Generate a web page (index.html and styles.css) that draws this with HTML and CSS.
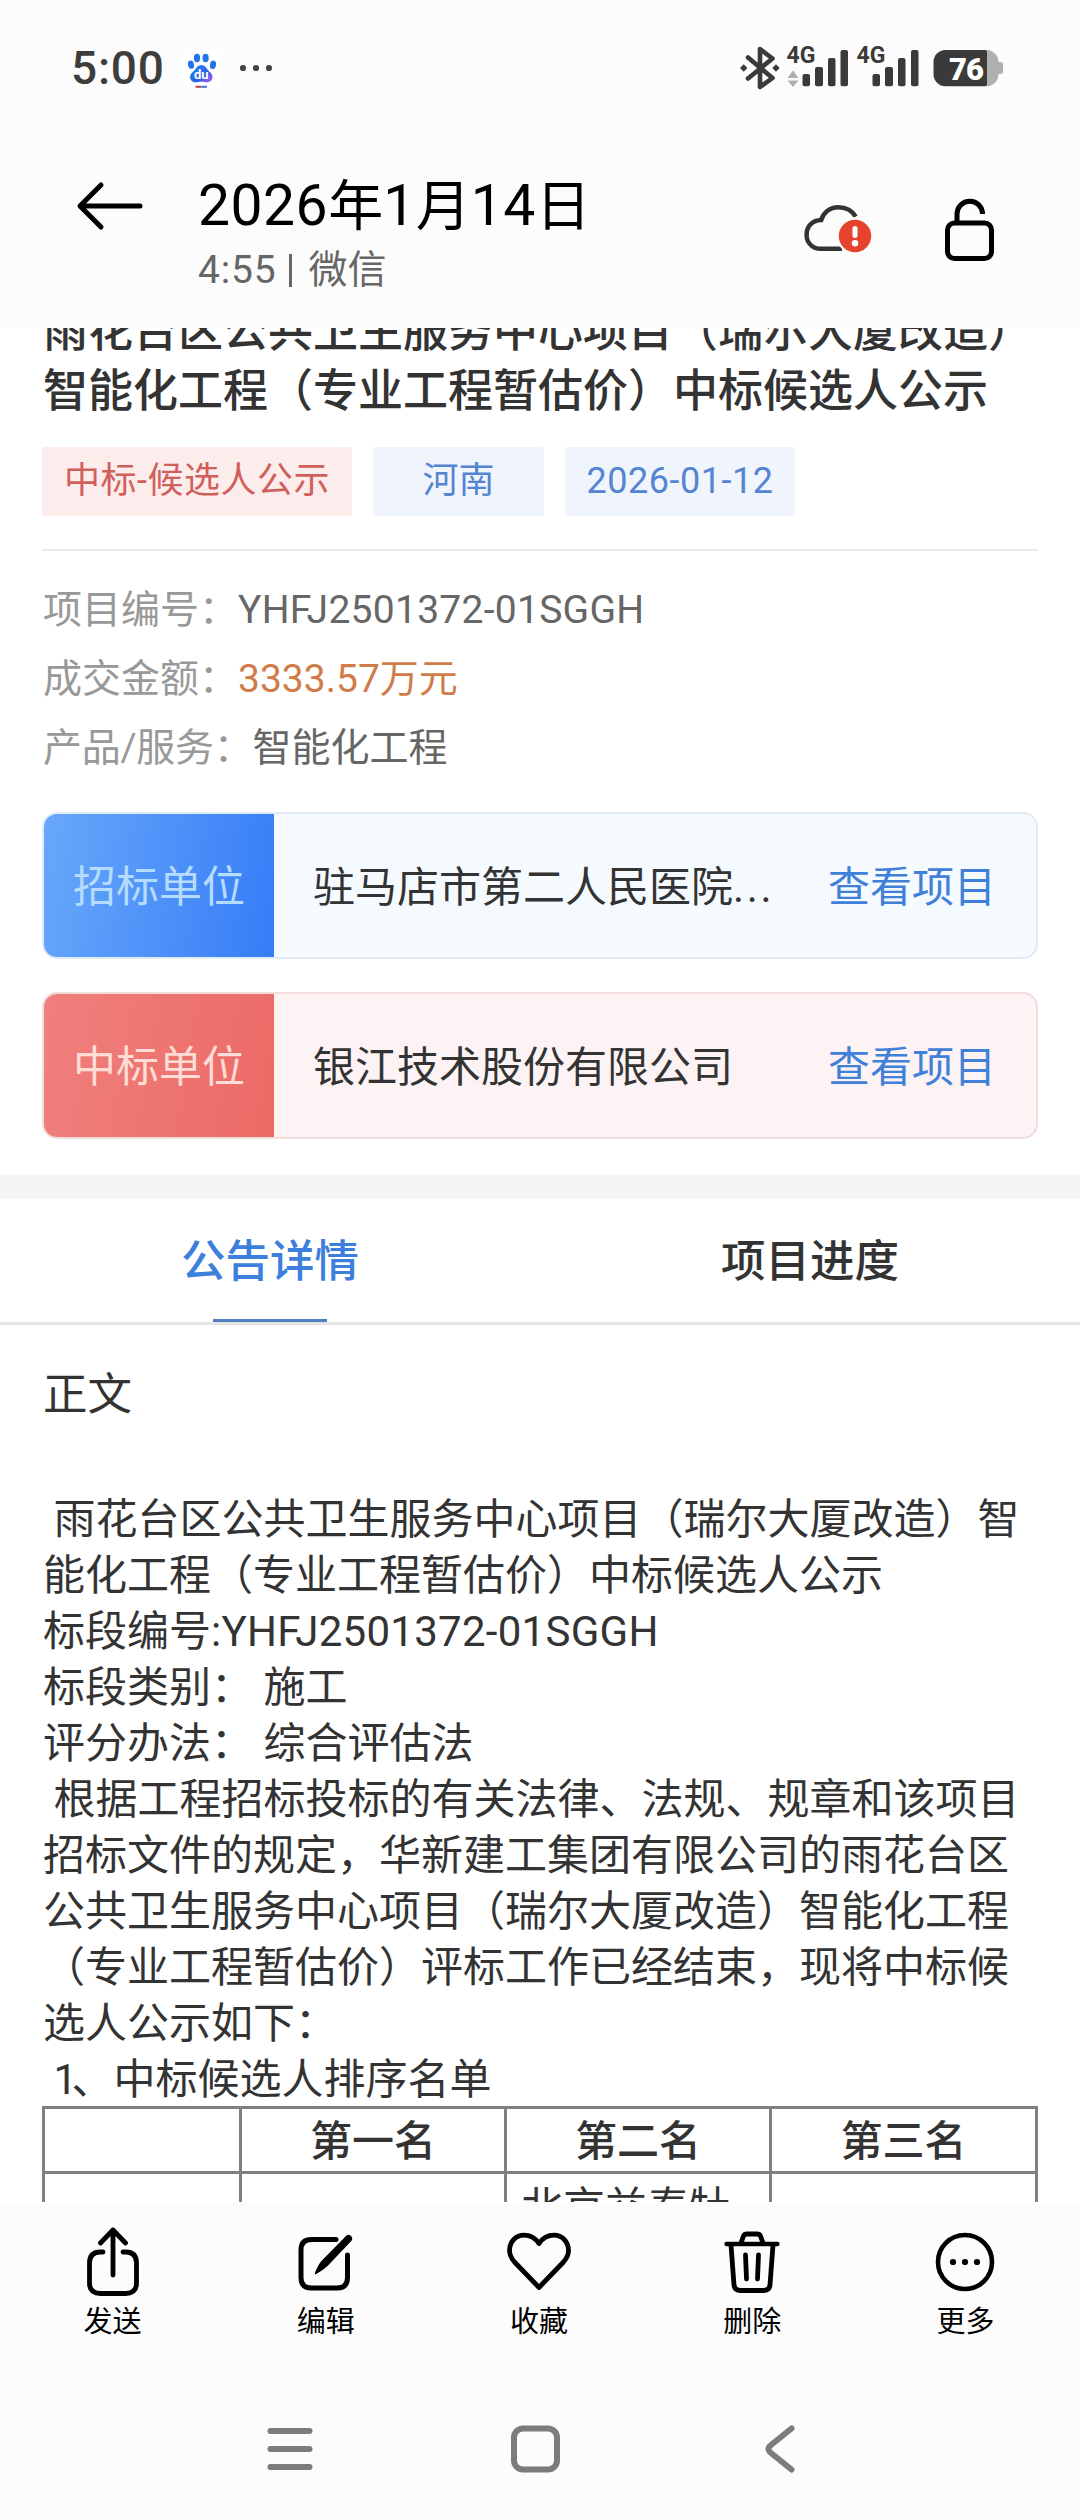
FILE: index.html
```html
<!DOCTYPE html>
<html lang="zh-CN">
<head>
<meta charset="utf-8">
<title>2026年1月14日</title>
<link rel="stylesheet" href="styles.css">
</head>
<body>
<div class="screen">
  <div class="status">
    <span class="clock">5:00</span>
    <svg class="paw" viewBox="0 0 38 39" width="38" height="39">
      <defs><linearGradient id="pawFill" x1="0" y1="0" x2="1" y2="1"><stop offset="0" stop-color="#1a8cf5"/><stop offset=".6" stop-color="#2b62ea"/><stop offset="1" stop-color="#b45cf0"/></linearGradient></defs>
      <rect width="38" height="39" rx="8" fill="#fff"/>
      <g fill="#2272ee"><ellipse cx="9" cy="15.6" rx="3" ry="4.2" transform="rotate(-12 9 15.6)"/><ellipse cx="15" cy="9" rx="3.1" ry="4.2"/><ellipse cx="23.6" cy="9" rx="3.1" ry="4.2"/><ellipse cx="31" cy="15.8" rx="3" ry="4.2" transform="rotate(12 31 15.8)"/></g>
      <path d="M19.3 16c3 0 4.700 2.200 6 4.300 1.500 2.300 5.200 4 5.200 7.700 0 3.600-2.600 5.300-5.700 5.300-2 0-3.500-.6-5.500-.6s-3.500.6-5.500.6c-3.100 0-5.700-1.700-5.700-5.300 0-3.700 3.700-5.400 5.200-7.700 1.300-2.100 3-4.300 6-4.300z" fill="url(#pawFill)"/>
      <text x="19.300" y="30" text-anchor="middle" class="paw-text">du</text>
      <path d="M13.500 37.800h6" stroke="#c8404f" stroke-width="2"/><path d="M19.500 37.800h5.500" stroke="#4670cf" stroke-width="2"/>
    </svg>
    <svg class="dots" viewBox="0 0 34 8" width="34" height="8"><g fill="#444"><circle cx="4" cy="4" r="3.100"/><circle cx="17" cy="4" r="3.100"/><circle cx="30" cy="4" r="3.100"/></g></svg>
    <svg class="signals" viewBox="736 40 272 54" width="272" height="54">
      <g fill="none" stroke="#3a3a3a" stroke-width="4.600" stroke-linejoin="round" stroke-linecap="round"><path d="M748 57.500l24.500 20.500-12.500 9V49l12.500 9.500-24.500 20"/></g>
      <path d="M740 68l3.700-3.700 3.700 3.700-3.700 3.700zM772.300 68l3.700-3.700 3.700 3.700-3.700 3.700z" fill="#3a3a3a"/>
      <text x="786.500" y="62.500" class="net">4G</text>
      <path d="M787.500 78l5.500-7.500 5.500 7.500zM787.500 80.500l5.500 6.500 5.500-6.500z" fill="#b0b0b0"/>
      <g fill="#3a3a3a"><rect x="802.500" y="74" width="7.500" height="12.200" rx="2"/><rect x="815" y="67" width="8" height="19.200" rx="2"/><rect x="828" y="58" width="7.500" height="28.200" rx="2"/><rect x="840.500" y="50" width="7.500" height="36.200" rx="2"/></g>
      <text x="856.500" y="62.500" class="net">4G</text>
      <g fill="#3a3a3a"><rect x="872.500" y="74" width="7.500" height="12.200" rx="2"/><rect x="885" y="67" width="8" height="19.200" rx="2"/><rect x="898" y="58" width="7.500" height="28.200" rx="2"/><rect x="911" y="50" width="7.500" height="36.200" rx="2"/></g>
      <path d="M986 50h1a12 12 0 0 1 11.500 12h2a2.500 2.500 0 0 1 2.500 2.500v7a2.500 2.500 0 0 1-2.500 2.500h-2a12 12 0 0 1-11.500 12.200h-1z" fill="#b0b0b0"/>
      <path d="M945.500 50H985a2 2 0 0 1 2 2v32.200a2 2 0 0 1-2 2h-39.500a12 12 0 0 1-12-12V62a12 12 0 0 1 12-12z" fill="#3a3a3a"/>
      <text x="966" y="79.500" text-anchor="middle" class="level">76</text>
    </svg>
  </div>

  <header class="header">
    <svg class="back" viewBox="0 0 68 50" width="68" height="50"><path d="M26 4L5 25l21 21M5.500 25H65" fill="none" stroke="#000" stroke-width="5" stroke-linecap="round" stroke-linejoin="round"/></svg>
    <div class="heading">
      <div class="date"><span class="n">2026</span>年<span class="n">1</span>月<span class="n">14</span>日</div>
      <div class="source"><span class="time">4:55</span><i></i><span>微信</span></div>
    </div>
    <svg class="cloud" viewBox="800 200 76 64" width="76" height="64">
      <path d="M842 255.800H819.500A13.500 13.500 0 0 1 806.700 241c0-8 6-13.700 14.500-14 2.300-7.500 8.800-12.800 17-12.800 8 0 14 3.400 17.500 9.500" transform="translate(0 -8)" fill="none" stroke="#333" stroke-width="4.500"/>
      <circle cx="855" cy="235" r="18.500" fill="#fcfcfc"/><circle cx="855" cy="235" r="16.200" fill="#e5432d"/>
      <path d="M855 227.500v7" stroke="#fff" stroke-width="5" stroke-linecap="round"/><circle cx="855" cy="242.300" r="3.200" fill="#fff"/>
    </svg>
    <svg class="lock" viewBox="940 192 60 72" width="60" height="72"><g fill="none" stroke="#000" stroke-width="5"><rect x="947.500" y="221" width="44" height="35.500" rx="7"/><path d="M957 221v-9a12.800 12.800 0 0 1 25.600 0"/></g></svg>
  </header>

  <main class="page">
    <h1 class="title">雨花台区公共卫生服务中心项目（瑞尔大厦改造）<br>智能化工程（专业工程暂估价）中标候选人公示</h1>
    <div class="tags"><span class="tag tag-red">中标-候选人公示</span><span class="tag tag-place">河南</span><span class="tag tag-date">2026-01-12</span></div>
    <div class="facts">
      <div class="fact"><span class="key">项目编号：</span><span class="code">YHFJ2501372-01SGGH</span></div>
      <div class="fact"><span class="key">成交金额：</span><span class="money">3333.57万元</span></div>
      <div class="fact"><span class="key key-wide">产品/服务：</span><span>智能化工程</span></div>
    </div>
    <div class="party party-blue"><div class="role">招标单位</div><div class="name">驻马店市第二人民医院<span class="more">...</span></div><a class="link">查看项目</a></div>
    <div class="party party-red"><div class="role">中标单位</div><div class="name">银江技术股份有限公司</div><a class="link">查看项目</a></div>
    <div class="band"></div>
    <nav class="tabs"><div class="tab active"><span>公告详情</span></div><div class="tab"><span>项目进度</span></div></nav>
    <h2 class="subtitle">正文</h2>
    <div class="body">
      <p> 雨花台区公共卫生服务中心项目（瑞尔大厦改造）智</p>
      <p>能化工程（专业工程暂估价）中标候选人公示</p>
      <p>标段编号<span class="code">:YHFJ2501372-01SGGH</span></p>
      <p>标段类别： 施工</p>
      <p>评分办法： 综合评估法</p>
      <p> 根据工程招标投标的有关法律、法规、规章和该项目</p>
      <p>招标文件的规定，华新建工集团有限公司的雨花台区</p>
      <p>公共卫生服务中心项目（瑞尔大厦改造）智能化工程</p>
      <p>（专业工程暂估价）评标工作已经结束，现将中标候</p>
      <p>选人公示如下：</p>
      <p> <span class="ordinal">1</span>、中标候选人排序名单</p>
    </div>
    <table class="rank">
      <colgroup><col class="c0"><col class="c1"><col class="c1"><col></colgroup>
      <tr><th></th><th>第一名</th><th>第二名</th><th>第三名</th></tr>
      <tr><td></td><td></td><td>北京益泰牡</td><td></td></tr>
    </table>
  </main>

  <footer class="footer">
    <div class="actions">
      <div class="action"><svg viewBox="0 0 76 76" width="76" height="76"><g fill="none" stroke="#000" stroke-width="4.800" stroke-linecap="round" stroke-linejoin="round"><path d="M38 53V8M25.500 21L38 8l12.500 13M28 30h-2.500Q14.500 30 14.500 41v20Q14.500 71.500 25.500 71.500h25Q61.500 71.500 61.500 61V41Q61.500 30 50.500 30H48"/></g></svg><span>发送</span></div>
      <div class="action"><svg viewBox="0 0 76 76" width="76" height="76"><path d="M48 17.500H23.500Q13 17.500 13 28v27.500Q13 66 23.500 66h25.500Q59.500 66 59.500 55.500V33" fill="none" stroke="#000" stroke-width="5" stroke-linecap="round"/><path d="M58.500 14.500q2-2 4 0t0 4.200L39 43.500q-4 4-11.500 8 3-8 6.500-12z" fill="#000" stroke="#000" stroke-width="1.500" stroke-linejoin="round"/></svg><span>编辑</span></div>
      <div class="action"><svg viewBox="0 0 76 76" width="76" height="76"><path d="M38 65.500L13.500 40C9.500 35.500 8.500 32 8.500 28.500 8.500 19.500 15 13.200 23 13.200c6 0 11.500 3.300 15 8.300 3.500-5 9-8.300 15-8.300 8 0 14.500 6.300 14.500 15.300 0 3.500-1 7-5 11.500z" fill="none" stroke="#000" stroke-width="4.800" stroke-linejoin="round"/></svg><span>收藏</span></div>
      <div class="action"><svg viewBox="0 0 76 76" width="76" height="76"><g fill="none" stroke="#000" stroke-width="4.800" stroke-linecap="round" stroke-linejoin="round"><path d="M12.500 22H63.500" stroke-width="4.300"/><path d="M27 21l2.500-7Q30.500 12 33 12H43Q45.500 12 46.500 14l2.500 7M17 23l3 40q.5 5.500 6.500 5.500h23q6 0 6.500-5.500l3-40M31.500 33l1 24M44.500 33l-1 24"/></g></svg><span>删除</span></div>
      <div class="action"><svg viewBox="0 0 76 76" width="76" height="76"><circle cx="38" cy="40" r="27" fill="none" stroke="#000" stroke-width="4.600"/><g fill="#000"><circle cx="26" cy="40" r="3.100"/><circle cx="38" cy="40" r="3.100"/><circle cx="50" cy="40" r="3.100"/></g></svg><span>更多</span></div>
    </div>
    <div class="nav">
      <svg viewBox="0 0 50 50" width="50" height="50"><path d="M5.500 7h39M5.500 25h39M5.500 43h39" stroke="#7c7c7c" stroke-width="6" stroke-linecap="round"/></svg>
      <svg viewBox="0 0 50 50" width="50" height="50"><rect x="4" y="4.500" width="43" height="41" rx="9" fill="none" stroke="#7c7c7c" stroke-width="6"/></svg>
      <svg viewBox="0 0 50 50" width="50" height="50"><path d="M36.500 4.500L16 21q-5 4 0 8L36.500 45.500" fill="none" stroke="#7c7c7c" stroke-width="6" stroke-linecap="round"/></svg>
    </div>
  </footer>
</div>
</body>
</html>
```
FILE: styles.css
```css
* { box-sizing: border-box; }
body { margin: 0; background: #fff; }
svg { display: block; flex: none; }
.screen { width: 1080px; height: 2520px; display: flex; flex-direction: column; overflow: hidden; font-family: "Roboto", "Noto Sans CJK SC", sans-serif; color: #333; white-space: nowrap; }

.status { height: 134px; flex: none; background: #fcfcfc; display: flex; align-items: flex-start; padding-left: 71px; }
.clock { width: 93px; margin-top: 41px; font: 500 46px/54px "Roboto", sans-serif; color: #3d3d3d; letter-spacing: 0.8px; }
.paw { margin: 49px 0 0 18px; }
.paw-text { font: 700 13px "Roboto", sans-serif; fill: #fff; }
.dots { margin: 64px 0 0 19px; }
.signals { margin: 40px 0 0 463px; }
.net { font: 700 23px "Roboto", sans-serif; fill: #3a3a3a; }
.level { font: 900 31px "Roboto", sans-serif; fill: #fff; letter-spacing: -1px; }

.header { height: 194px; flex: none; background: #fcfcfc; display: flex; align-items: flex-start; padding-left: 75px; }
.back { margin-top: 47px; }
.heading { width: 600px; margin: 34px 0 0 55px; }
.date { height: 76px; font-size: 55px; line-height: 76px; color: #000; }
.date .n { font-size: 57px; letter-spacing: 0.5px; }
.source { display: flex; align-items: center; height: 56px; margin-top: -2px; font-size: 39px; line-height: 56px; color: #666; }
.time { letter-spacing: 0.8px; }
.source i { width: 3px; height: 33px; margin: 0 16px 0 13px; background: #666; }
.cloud { margin: 67px 0 0 2px; }
.lock { margin: 60px 0 0 64px; }

.page { height: 1874px; flex: none; overflow: hidden; }
.title { margin: -26px 0 0 43px; font-size: 45px; line-height: 60px; font-weight: 500; }
.tags { display: flex; gap: 21px; margin: 25px 42px 0; height: 104px; border-bottom: 2px solid #ebebeb; }
.tag { height: 69px; border-radius: 3px; text-align: center; font-size: 36px; line-height: 68px; }
.tag-red { width: 310px; background: #fdecec; color: #d0605c; letter-spacing: 0.5px; }
.tag-place { width: 171px; background: #eff4fd; color: #5585d0; }
.tag-date { width: 230px; background: #eff4fd; color: #5585d0; letter-spacing: 0.5px; }
.facts { margin: 23px 0 0 43px; }
.fact { display: flex; height: 69px; font-size: 39px; line-height: 72px; color: #666; }
.key { color: #999; }
.key-wide { letter-spacing: -0.25px; }
.code { letter-spacing: 0.27px; }
.money { color: #d07c4a; }
.party { display: flex; align-items: stretch; width: 996px; height: 147px; margin: 31px 42px 0; border: 2px solid; border-radius: 15px; overflow: hidden; font-size: 42px; line-height: 147px; }
.party + .party { margin-top: 33px; }
.party-blue { background: #f5faff; border-color: #e0ebf5; }
.party-red { background: #fdf3f4; border-color: #f2dcdc; }
.role { width: 230px; text-align: center; font-size: 43px; }
.party-blue .role { background: linear-gradient(100deg, #68a8fa, #367cf7); color: #b5dcff; }
.party-red .role { background: linear-gradient(100deg, #ef807c, #ec6a66); color: #ffdcd5; }
.name { width: 554px; padding-left: 39px; }
.more { letter-spacing: 2.7px; }
.link { color: #4080d8; }
.band { height: 24px; margin-top: 36px; background: #f5f5f5; }
.tabs { display: flex; height: 126px; border-bottom: 3px solid #e5e5e5; }
.tab { flex: 1; display: flex; flex-direction: column; align-items: center; font-size: 44.5px; font-weight: 500; line-height: 126px; }
.tab span { height: 120px; }
.active { color: #3d7fdc; }
.active::after { content: ""; width: 114px; height: 3px; background: #5080c0; }
.subtitle { margin: 40px 0 0 43px; font-size: 44.5px; font-weight: 400; line-height: 60px; }
.body { display: flex; flex-direction: column; margin: 67px 0 -2px 43px; font-size: 42px; line-height: 56px; white-space: pre; }
.body p { margin: 0; height: 56px; }
.ordinal { letter-spacing: -5.5px; }
.rank { width: 996px; margin: 0 42px; border-collapse: collapse; table-layout: fixed; font-size: 42px; line-height: 56px; }
.rank th, .rank td { height: 65px; border: 3px solid #808080; padding: 3px 0 0; font-weight: 500; }
.rank td { height: 200px; padding: 6px 0 0 14px; vertical-align: top; font-weight: 400; text-align: left; }
.c0 { width: 197px; }
.c1 { width: 265px; }

.footer { flex: 1; background: #fcfcfd; }
.actions { display: flex; padding: 20px 8px 0 6px; height: 180px; }
.action { flex: 1; display: flex; flex-direction: column; align-items: center; gap: 4px; font-size: 29px; line-height: 40px; color: #000; }
.nav { display: flex; gap: 195px; margin: 42px 0 0 265px; }
```
